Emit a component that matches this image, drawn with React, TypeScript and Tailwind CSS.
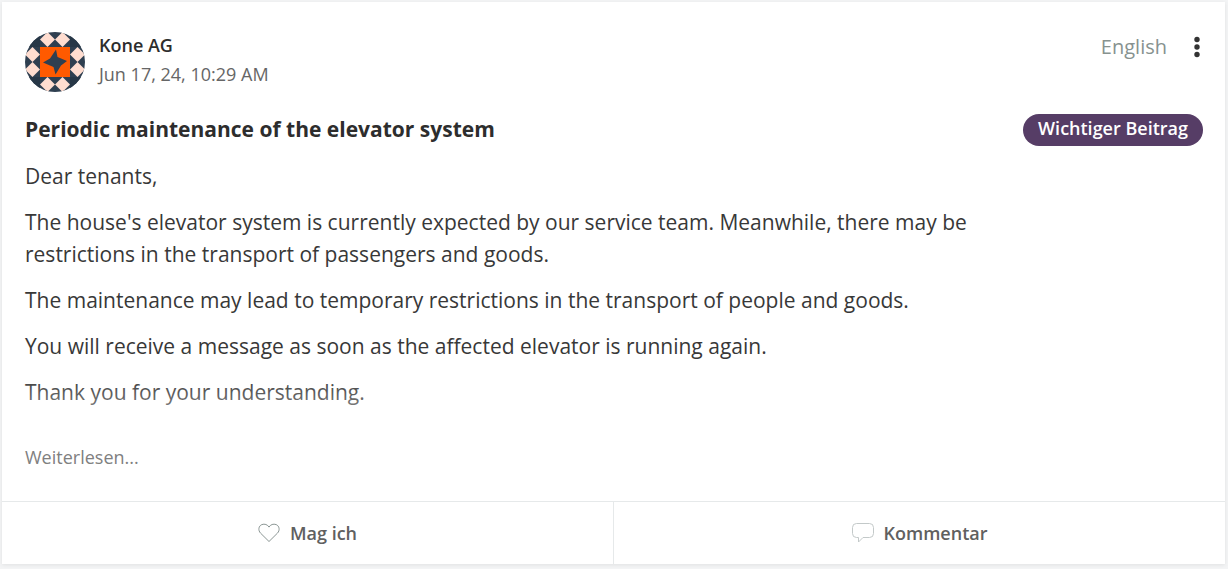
import type { ReactNode } from "react";

const paragraphs = [
  "Dear tenants,",
  "The house's elevator system is currently expected by our service team. Meanwhile, there may be restrictions in the transport of passengers and goods.",
  "The maintenance may lead to temporary restrictions in the transport of people and goods.",
  "You will receive a message as soon as the affected elevator is running again.",
  "Thank you for your understanding.",
];

const diamonds = [
  [22.5, 7.5], [37.5, 7.5],
  [7.5, 22.5], [52.5, 22.5],
  [7.5, 37.5], [52.5, 37.5],
  [22.5, 52.5], [37.5, 52.5],
];

const Avatar = () => (
  <svg viewBox="0 0 60 60" className="size-15 shrink-0 rounded-full" role="img" aria-label="Kone AG">
    <rect width="60" height="60" fill="#2f3f50" />
    <path d="M0 15h15V0zM45 0v15h15zM0 45h15v15zM45 45v15l15-15z" fill="#273747" />
    {diamonds.map(([x, y]) => (
      <path key={`${x}-${y}`} d={`M${x} ${y - 7.5}l7.500 7.500-7.500 7.500-7.500-7.500z`} fill="#ffddd0" />
    ))}
    <rect x="15" y="15" width="30" height="30" fill="#ff5a00" />
    <path d="M31 17.5L32.500 25 42 29 36 33.500 30.500 42.500 28.500 35 18 30.500 25 26.500z" fill="#2f3f50" />
  </svg>
);

const HeartIcon = () => (
  <svg viewBox="0 0 22 20" className="h-5 w-[22px]" fill="none" stroke="#8b9694" strokeWidth="1" aria-hidden="true">
    <path d="M11 18.5L2.6 10.2C-.2 7.3.6 2.9 3.8 1.6 6.6.5 9.6 1.6 11 4.1 12.4 1.6 15.4.5 18.2 1.6c3.2 1.3 4 5.7 1.2 8.6z" />
  </svg>
);

const CommentIcon = () => (
  <svg viewBox="0 0 22 20" className="h-5 w-[22px]" fill="none" stroke="#c3c9c9" strokeWidth="1" aria-hidden="true">
    <path d="M4.5.5h13a4 4 0 0 1 4 4v6a4 4 0 0 1-4 4h-6.500l-4.500 4.500v-4.500h-2a4 4 0 0 1-4-4v-6a4 4 0 0 1 4-4z" />
  </svg>
);

const ActionButton = ({ icon, children }: { icon: ReactNode; children: ReactNode }) => (
  <button type="button" className="flex flex-1 items-center justify-center gap-2.5 text-lg font-semibold text-[#606060]">
    {icon}
    <span>{children}</span>
  </button>
);

const App = () => {
  return (
    <main className="bg-[#f3f4f5] pt-0.5 pr-[3px] pb-[5px] pl-0.5 font-['Open_Sans',sans-serif]">
      <article className="bg-white text-[#2d2d2d] shadow-[0_1px_4px_rgba(0,0,0,0.08)]">
        <div className="pt-[30px] pr-[22px] pb-[30px] pl-[23px]">
          <header className="flex items-start justify-between">
            <div className="flex items-start gap-3.5">
              <Avatar />
              <div className="text-lg">
                <p className="leading-[27px] font-semibold">Kone AG</p>
                <p className="leading-[30px] text-[#666]">Jun 17, 24, 10:29 AM</p>
              </div>
            </div>
            <div className="flex items-center gap-6 pt-px">
              <button type="button" className="text-xl text-[#87928f]">English</button>
              <button type="button" aria-label="Menu">
                <svg viewBox="0 0 12 22" className="h-[22px] w-3" fill="#333" aria-hidden="true">
                  <circle cx="6" cy="3.500" r="2.700" />
                  <circle cx="6" cy="11" r="2.700" />
                  <circle cx="6" cy="18.500" r="2.700" />
                </svg>
              </button>
            </div>
          </header>

          <div className="mt-[22px] flex items-start justify-between gap-6">
            <div>
              <h2 className="text-[21px] leading-[30px] font-bold">Periodic maintenance of the elevator system</h2>
              <div className="relative mt-4 space-y-3.5 text-[21px] leading-8 text-[#383838]">
                {paragraphs.map((text) => (
                  <p key={text}>{text}</p>
                ))}
                <div className="pointer-events-none absolute inset-x-0 bottom-0 h-8 bg-linear-to-b from-transparent to-white/35" />
              </div>
            </div>
            <span className="h-8 shrink-0 rounded-full bg-[#563d66] px-[15px] text-lg leading-[29px] font-semibold text-white">
              Wichtiger Beitrag
            </span>
          </div>

          <a href="#" className="mt-[21px] block w-fit text-lg text-[#808080]">Weiterlesen...</a>
        </div>

        <footer className="flex h-[63px] divide-x divide-[#e6e9ea] border-t border-[#e6e9ea]">
          <ActionButton icon={<HeartIcon />}>Mag ich</ActionButton>
          <ActionButton icon={<CommentIcon />}>Kommentar</ActionButton>
        </footer>
      </article>
    </main>
  );
};

export default App;
